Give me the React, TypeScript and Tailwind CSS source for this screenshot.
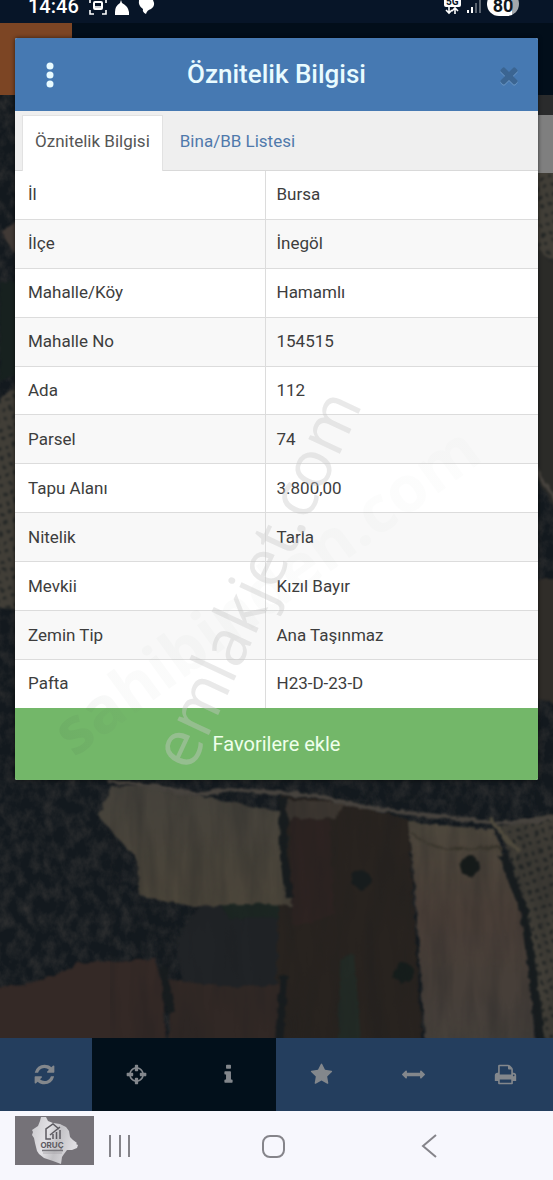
import type { ReactNode } from "react";

const rows: [string, string][] = [
  ["İl", "Bursa"],
  ["İlçe", "İnegöl"],
  ["Mahalle/Köy", "Hamamlı"],
  ["Mahalle No", "154515"],
  ["Ada", "112"],
  ["Parsel", "74"],
  ["Tapu Alanı", "3.800,00"],
  ["Nitelik", "Tarla"],
  ["Mevkii", "Kızıl Bayır"],
  ["Zemin Tip", "Ana Taşınmaz"],
  ["Pafta", "H23-D-23-D"],
];

const tools = [
  {
    label: "Yenile",
    active: false,
    path: "M1639 1056q0 5-1 7-64 268-268 434.5t-478 166.5q-146 0-282.5-55t-243.5-157l-129 129q-19 19-45 19t-45-19-19-45v-448q0-26 19-45t45-19h448q26 0 45 19t19 45-19 45l-137 137q71 66 161 102t187 36q134 0 250-65t186-179q11-17 53-117 8-23 30-23h192q13 0 22.5 9.5t9.5 22.5zm25-800v448q0 26-19 45t-45 19h-448q-26 0-45-19t-19-45 19-45l138-138q-148-137-349-137-134 0-250 65t-186 179q-11 17-53 117-8 23-30 23h-199q-13 0-22.5-9.5t-9.5-22.5v-7q65-268 270-434.5t480-166.5q146 0 284 55.5t245 156.5l130-129q19-19 45-19t45 19 19 45z",
  },
  {
    label: "Konum",
    active: true,
    path: "M1325 1024h-109q-26 0-45-19t-19-45v-128q0-26 19-45t45-19h109q-32-108-112.5-188.5t-188.5-112.5v109q0 26-19 45t-45 19h-128q-26 0-45-19t-19-45v-109q-108 32-188.5 112.5t-112.5 188.5h109q26 0 45 19t19 45v128q0 26-19 45t-45 19h-109q32 108 112.5 188.5t188.5 112.5v-109q0-26 19-45t45-19h128q26 0 45 19t19 45v109q108-32 188.5-112.5t112.5-188.5zm339-192v128q0 26-19 45t-45 19h-143q-37 161-154.5 278.5t-278.5 154.5v143q0 26-19 45t-45 19h-128q-26 0-45-19t-19-45v-143q-161-37-278.5-154.5t-154.5-278.5h-143q-26 0-45-19t-19-45v-128q0-26 19-45t45-19h143q37-161 154.5-278.5t278.5-154.5v-143q0-26 19-45t45-19h128q26 0 45 19t19 45v143q161 37 278.5 154.5t154.5 278.5h143q26 0 45 19t19 45z",
  },
  {
    label: "Bilgi",
    active: true,
    path: "M1216 1344v128q0 26-19 45t-45 19h-512q-26 0-45-19t-19-45v-128q0-26 19-45t45-19h64v-384h-64q-26 0-45-19t-19-45v-128q0-26 19-45t45-19h384q26 0 45 19t19 45v576h64q26 0 45 19t19 45zm-128-1152v192q0 26-19 45t-45 19h-256q-26 0-45-19t-19-45v-192q0-26 19-45t45-19h256q26 0 45 19t19 45z",
  },
  {
    label: "Favoriler",
    active: false,
    path: "M1728 647q0 22-26 48l-363 354 86 500q1 7 1 20 0 21-10.5 35.5t-30.5 14.5q-19 0-40-12l-449-236-449 236q-22 12-40 12-21 0-31.5-14.5t-10.5-35.5q0-6 2-20l86-500-364-354q-25-27-25-48 0-37 56-46l502-73 225-455q19-41 49-41t49 41l225 455 502 73q56 9 56 46z",
  },
  {
    label: "Ölç",
    active: false,
    path: "M1792 896q0 26-19 45l-256 256q-19 19-45 19t-45-19-19-45v-128h-1024v128q0 26-19 45t-45 19-45-19l-256-256q-19-19-19-45t19-45l256-256q19-19 45-19t45 19 19 45v128h1024v-128q0-26 19-45t45-19 45 19l256 256q19 19 19 45z",
  },
  {
    label: "Yazdır",
    active: false,
    path: "M448 1536h896v-256h-896v256zm0-640h896v-384h-160q-40 0-68-28t-28-68v-160h-640v640zm1152 64q0-26-19-45t-45-19-45 19-19 45 19 45 45 19 45-19 19-45zm128 0v416q0 13-9.5 22.5t-22.5 9.5h-224v160q0 40-28 68t-68 28h-960q-40 0-68-28t-28-68v-160h-224q-13 0-22.5-9.5t-9.5-22.5v-416q0-79 56.5-135.5t135.5-56.5h64v-544q0-40 28-68t68-28h672q40 0 88 20t76 48l152 152q28 28 48 76t20 88v256h64q79 0 135.5 56.5t56.5 135.5z",
  },
];

const closePath =
  "M1490 1322q0 40-28 68l-136 136q-28 28-68 28t-68-28l-294-294-294 294q-28 28-68 28t-68-28l-136-136q-28-28-28-68t28-68l294-294-294-294q-28-28-28-68t28-68l136-136q28-28 68-28t68 28l294 294 294-294q28-28 68-28t68 28l136 136q28 28 28 68t-28 68l-294 294 294 294q28 28 28 68z";

function Aerial() {
  return (
    <svg
      aria-hidden="true"
      className="absolute inset-0 h-full w-full"
      viewBox="0 0 553 1180"
      preserveAspectRatio="xMidYMid slice"
    >
      <defs>
        <filter id="canopy" x="0" y="0" width="100%" height="100%" colorInterpolationFilters="sRGB">
          <feTurbulence type="fractalNoise" baseFrequency="0.09 0.07" numOctaves="4" seed="7" />
          <feColorMatrix values="0 0 0 0 0.2  0 0 0 0 0.2  0 0 0 0 0.2  1.5 0 0 0 -0.55" />
        </filter>
        <filter id="soil" x="0" y="0" width="100%" height="100%" colorInterpolationFilters="sRGB">
          <feTurbulence type="fractalNoise" baseFrequency="0.06 0.012" numOctaves="3" seed="3" />
          <feColorMatrix values="0 0 0 0 0.1  0 0 0 0 0.11  0 0 0 0 0.12  1.2 0 0 0 -0.42" />
        </filter>
        <filter id="rough" x="-5%" y="-5%" width="110%" height="110%" colorInterpolationFilters="sRGB">
          <feTurbulence type="fractalNoise" baseFrequency="0.12" numOctaves="2" seed="5" result="noise" />
          <feDisplacementMap in="SourceGraphic" in2="noise" scale="6" xChannelSelector="R" yChannelSelector="G" />
          <feGaussianBlur stdDeviation="0.8" />
        </filter>
        <linearGradient id="east" x1="0" y1="0" x2="0" y2="1">
          <stop offset="0" stopColor="#4e483d" />
          <stop offset="0.4" stopColor="#493e37" />
          <stop offset="1" stopColor="#45403b" />
        </linearGradient>
        <linearGradient id="west" x1="0" y1="0" x2="0" y2="1">
          <stop offset="0" stopColor="#45423b" />
          <stop offset="1" stopColor="#4b453a" />
        </linearGradient>
        <pattern id="orchard" width="8" height="9" patternUnits="userSpaceOnUse" patternTransform="rotate(-18)">
          <rect width="8" height="9" fill="#413e37" />
          <circle cx="4" cy="4" r="2" fill="#232625" />
        </pattern>
      </defs>
      <rect width="553" height="1180" fill="#13191e" />
      <rect width="553" height="1180" filter="url(#canopy)" />
      <g filter="url(#rough)">
        <path d="M3 232q12-12 20-8v32q-16-6-20-24z" fill="#413a36" />
        <path d="M0 282h20v90l-20 10z" fill="#17211f" />
        <path d="M-5 405l25-25v232l-25-6z" fill="url(#orchard)" />
        <path d="M530 165h30v100l-30-18z" fill="url(#orchard)" />
        <path d="M530 240l30 30v245l-30-45z" fill="#2b2b28" />
        <path d="M530 462l30 44" stroke="#48443f" strokeWidth="4" />
        <path d="M530 580h30v125l-30-8z" fill="#302d29" />
        <path d="M205 900q50-10 90 0v75l-10 20H185L175 940z" fill="#202326" />
        <path d="M218 904q35-10 72 0v16q-35-6-60 0z" fill="#1c2622" />
        <path d="M280 795l60 5 68 20 15 230H276z" fill="#28231f" />
        <path d="M286 800l60 2-10 16-48 2z" fill="#3d3731" />
        <path d="M290 818l40 2 4 95-42 12z" fill="#2d2321" />
        <path d="M112 787l36-2 58 12 78 16 4 28-2 30 7 36q-30-6-75-1-35 3-79-11l-1-34-40-46z" fill="url(#west)" />
        <path d="M408 822l85 8 15 35 12 36 8 60 8 92H426l-10-150z" fill="url(#east)" />
        <path d="M500 826l60-14v240h-16l-20-138-10-40z" fill="url(#orchard)" />
        <path d="M-5 988q55-5 82-25l78-4 8 30 4 70H-5z" fill="#342926" />
        <path d="M170 979q60 12 116 5l-7 75H169z" fill="#312825" />
        <path d="M340 960l14-6 8 100h-24z" fill="#222a25" />
        <circle cx="361" cy="880" r="10" fill="#171c1d" />
        <circle cx="403" cy="973" r="10" fill="#151d1b" />
        <circle cx="470" cy="866" r="10" fill="#151a19" />
        <path
          d="M283 797l1 60 5 40M502 855l22 55 18 135M163 968l8 45M284 975l-5 70"
          fill="none"
          stroke="#171c1e"
          strokeWidth="8"
        />
      </g>
      <rect y="780" x="110" width="443" height="270" filter="url(#soil)" opacity="0.4" />
      <g fill="none" filter="url(#rough)">
        <path
          d="M108 781l50 6 40 8 32-6 90 7q40 12 80 16t80 9q35 5 74-4"
          stroke="#47433e"
          strokeWidth="4"
        />
        <path d="M490 818l14 18 16 17" stroke="#4f4a3d" strokeWidth="4" />
        <path d="M412 834q20 15 43 15l48-1" stroke="#36332a" strokeWidth="2" />
      </g>
    </svg>
  );
}

function Watermarks() {
  return (
    <svg
      aria-hidden="true"
      className="pointer-events-none absolute left-0 top-0 h-[1180px] w-[553px]"
      viewBox="0 0 553 1180"
    >
      <defs>
        <linearGradient id="fade" x1="0" y1="0" x2="1" y2="0">
          <stop offset="0" stopColor="#3f5f45" stopOpacity="0.09" />
          <stop offset="0.15" stopColor="#5f6f63" stopOpacity="0.03" />
          <stop offset="1" stopColor="#7f8f83" stopOpacity="0.02" />
        </linearGradient>
      </defs>
      <text
        x="74"
        y="758"
        transform="rotate(-36 74 758)"
        fontSize="64"
        fontWeight="700"
        fill="url(#fade)"
        className="font-['Open_Sans',sans-serif]"
      >
        sahibinden.com
      </text>
      <text
        x="191"
        y="773"
        transform="rotate(-65 191 773)"
        fontSize="65"
        className="fill-[#c7c7c7]/40 font-['Open_Sans',sans-serif]"
      >
        emlakjet.com
      </text>
    </svg>
  );
}

function StatusBar() {
  return (
    <header className="relative flex h-[23px] items-end justify-between overflow-hidden bg-[#071528] pl-[28px] pr-[34px] text-white">
      <div className="flex h-[23px] items-start gap-2">
        <span className="-mt-2 text-[20px] font-medium leading-7">14:46</span>
        <svg width="70" height="17" viewBox="0 0 70 17" aria-hidden="true">
          <g fill="none" stroke="#fff" strokeWidth="1.6">
            <path d="M3 10v4h4M15 14h4v-4M3 3V0M19 3V0" />
            <rect x="7" y="2" width="8" height="7" rx="1" strokeWidth="2" />
            <path d="M8 7h6" />
          </g>
          <path d="M34 0l1 3q6 3 7 9v3H28v-3q0-6 5-9z" fill="#fff" />
          <path d="M52 0h14q3 6-2 9-4 1-5 5-4-2-3-5-5-3-4-9z" fill="#fff" />
        </svg>
      </div>
      <div className="flex h-[23px] items-start gap-1">
        <svg width="40" height="17" viewBox="0 0 40 17" aria-hidden="true">
          <rect x="1" y="-6" width="17" height="13" rx="2" fill="#fff" />
          <text x="3" y="5" fontSize="10" fontWeight="700" fill="#071528" className="font-[Roboto,sans-serif]">
            5G
          </text>
          <path d="M6 7v6M3 10l3 3 3-3M12 14V8M9 11l3-3 3 3" fill="none" stroke="#fff" strokeWidth="1.6" />
          <path d="M25 10v3M29 7v6" stroke="#fff" strokeWidth="2" />
          <path d="M33 3v10M37 0v13" stroke="#59636f" strokeWidth="2" />
        </svg>
        <span className="-mt-2 flex h-6 w-8 items-center justify-center rounded-full bg-linear-to-r from-white from-78% to-[#a3a7ac] to-78% pt-1 text-[18px] font-bold leading-none text-[#101820]">
          80
        </span>
      </div>
    </header>
  );
}

function NavButton({ label, children }: { label: string; children: ReactNode }) {
  return (
    <button type="button" aria-label={label} className="flex h-full items-center justify-center px-4">
      <svg width="26" height="26" viewBox="0 0 26 26" fill="none" stroke="#85848a" strokeWidth="2" aria-hidden="true">
        {children}
      </svg>
    </button>
  );
}

function AgencyLogo() {
  return (
    <svg
      role="img"
      aria-label="Oruç Gayrimenkul"
      viewBox="0 0 79 49"
      className="absolute left-[15px] top-[5px] h-[49px] w-[79px]"
    >
      <defs>
        <linearGradient id="silver" x1="0" y1="0" x2="1" y2="0.3">
          <stop offset="0" stopColor="#c9c8cc" />
          <stop offset="0.4" stopColor="#e2e1e5" />
          <stop offset="0.65" stopColor="#c2c1c5" />
          <stop offset="1" stopColor="#dedde1" />
        </linearGradient>
      </defs>
      <rect width="79" height="49" fill="#757278" />
      <path
        d="M26 1l5 0 2 4 5 2 7 1 6 3 3 4 1 6 3 3 4 3-1 1 2 1-1 3-5 2-5 0-3 4-2 3-1 7-8-3-9-3-5-4-2-3-2-8-1-5-2-3 1-3-1-2 6-4 2-5z"
        fill="url(#silver)"
      />
      <g fill="none" stroke="#5c5a60" strokeWidth="1.5">
        <path d="M36 23h-5V13l7-5 6 5M31 23V13M38 23v-5M41.500 23v-7M45 23V14M35 19l10-8" />
      </g>
      <text
        x="37"
        y="32"
        textAnchor="middle"
        fontSize="8"
        fontWeight="700"
        className="fill-[#5c5a60] font-[Inter,sans-serif]"
      >
        ORUÇ
      </text>
      <path d="M27 34.500h21" stroke="#77757b" strokeWidth="1.6" />
      <path d="M28 37h19" stroke="#a3a1a6" strokeWidth="0.8" />
    </svg>
  );
}

export default function App() {
  return (
    <div className="relative flex min-h-screen flex-col overflow-hidden bg-[#13191f] font-[Roboto,'Noto_Sans',sans-serif] text-[#3d3d3d]">
      <Aerial />

      <div className="absolute inset-x-0 top-[23px]">
        <div className="flex h-[72px] bg-[#020e1a]">
          <div className="w-[72px] bg-[#7c4524]" />
        </div>
        <div className="ml-auto w-1/2 bg-[#7f7f7f]">
          <div className="h-5 bg-[#2a2b2c]" />
          <div className="h-[58px]" />
        </div>
      </div>

      <StatusBar />

      <main className="relative flex-1 px-[15px] pb-8 pt-[15px]">
        <section
          role="dialog"
          aria-labelledby="dialog-title"
          className="overflow-hidden rounded-xs bg-white shadow-[0_0_4px_rgba(0,0,0,0.6)]"
        >
          <div className="flex h-[73px] items-center justify-between bg-[#4679b2] pl-[19px] pr-4">
            <button type="button" aria-label="Menü" className="flex w-8 justify-center">
              <svg width="8" height="26" viewBox="0 0 8 26" fill="#e9fbff" aria-hidden="true">
                <circle cx="4" cy="4" r="3.500" />
                <circle cx="4" cy="13" r="3.500" />
                <circle cx="4" cy="22" r="3.500" />
              </svg>
            </button>
            <h1 id="dialog-title" className="text-[26px] font-medium text-[#e9fbff]">
              Öznitelik Bilgisi
            </h1>
            <button type="button" aria-label="Kapat" className="flex w-[35px] justify-end">
              <svg width="26" height="26" viewBox="0 0 1792 1792" aria-hidden="true">
                <path d={closePath} fill="#6c98c6" transform="translate(0 70)" />
                <path d={closePath} fill="#3b6592" />
              </svg>
            </button>
          </div>

          <div role="tablist" className="flex h-[60px] items-end border-b border-[#d9d9d9] bg-[#efefef] pl-[7px]">
            <button
              type="button"
              role="tab"
              aria-selected="true"
              className="-mb-px h-[56px] border border-b-0 border-[#e2e2e2] bg-white px-3 pb-[3px] text-[17px] text-[#555]"
            >
              Öznitelik Bilgisi
            </button>
            <button
              type="button"
              role="tab"
              aria-selected="false"
              className="h-[56px] px-[17px] text-[17px] text-[#4f79ab]"
            >
              Bina/BB Listesi
            </button>
          </div>

          <table className="h-[537px] w-full table-fixed border-collapse text-left text-[17px]">
            <colgroup>
              <col className="w-[250px]" />
              <col />
            </colgroup>
            <tbody>
              {rows.map(([name, value]) => (
                <tr key={name} className="border-b border-[#dcdcdc] odd:bg-white even:bg-[#f8f8f8] last:border-b-0">
                  <th scope="row" className="border-r border-[#dcdcdc] pl-[13px] pr-3 font-normal">
                    {name}
                  </th>
                  <td className="px-[11px]">{value}</td>
                </tr>
              ))}
            </tbody>
          </table>

          <button type="button" className="h-[72px] w-full bg-[#73b769] text-[20px] text-[#efffeb]">
            Favorilere ekle
          </button>
        </section>
      </main>

      <div
        role="toolbar"
        aria-label="Harita araçları"
        className="relative grid h-[73px] grid-cols-6 bg-[#243e5e]"
      >
        {tools.map((tool) => (
          <button
            key={tool.label}
            type="button"
            aria-label={tool.label}
            className={`flex items-center justify-center pr-[3px] ${tool.active ? "bg-[#02101b]" : "bg-[#243e5e]"}`}
          >
            <svg width="23" height="23" viewBox="0 0 1792 1792" fill="#83878c" aria-hidden="true">
              <path d={tool.path} />
            </svg>
          </button>
        ))}
      </div>

      <nav className="relative grid h-[69px] grid-cols-3 justify-items-center bg-[#f7f7fd] pl-[43px] pr-[47px]">
        <NavButton label="Son uygulamalar">
          <path d="M3 2v22M13 2v22M22 2v22" />
        </NavButton>
        <NavButton label="Ana ekran">
          <rect x="2" y="3" width="21" height="21" rx="7" />
        </NavButton>
        <NavButton label="Geri">
          <path d="M20 2L7 13l13 11" />
        </NavButton>
        <AgencyLogo />
      </nav>

      <Watermarks />
    </div>
  );
}
